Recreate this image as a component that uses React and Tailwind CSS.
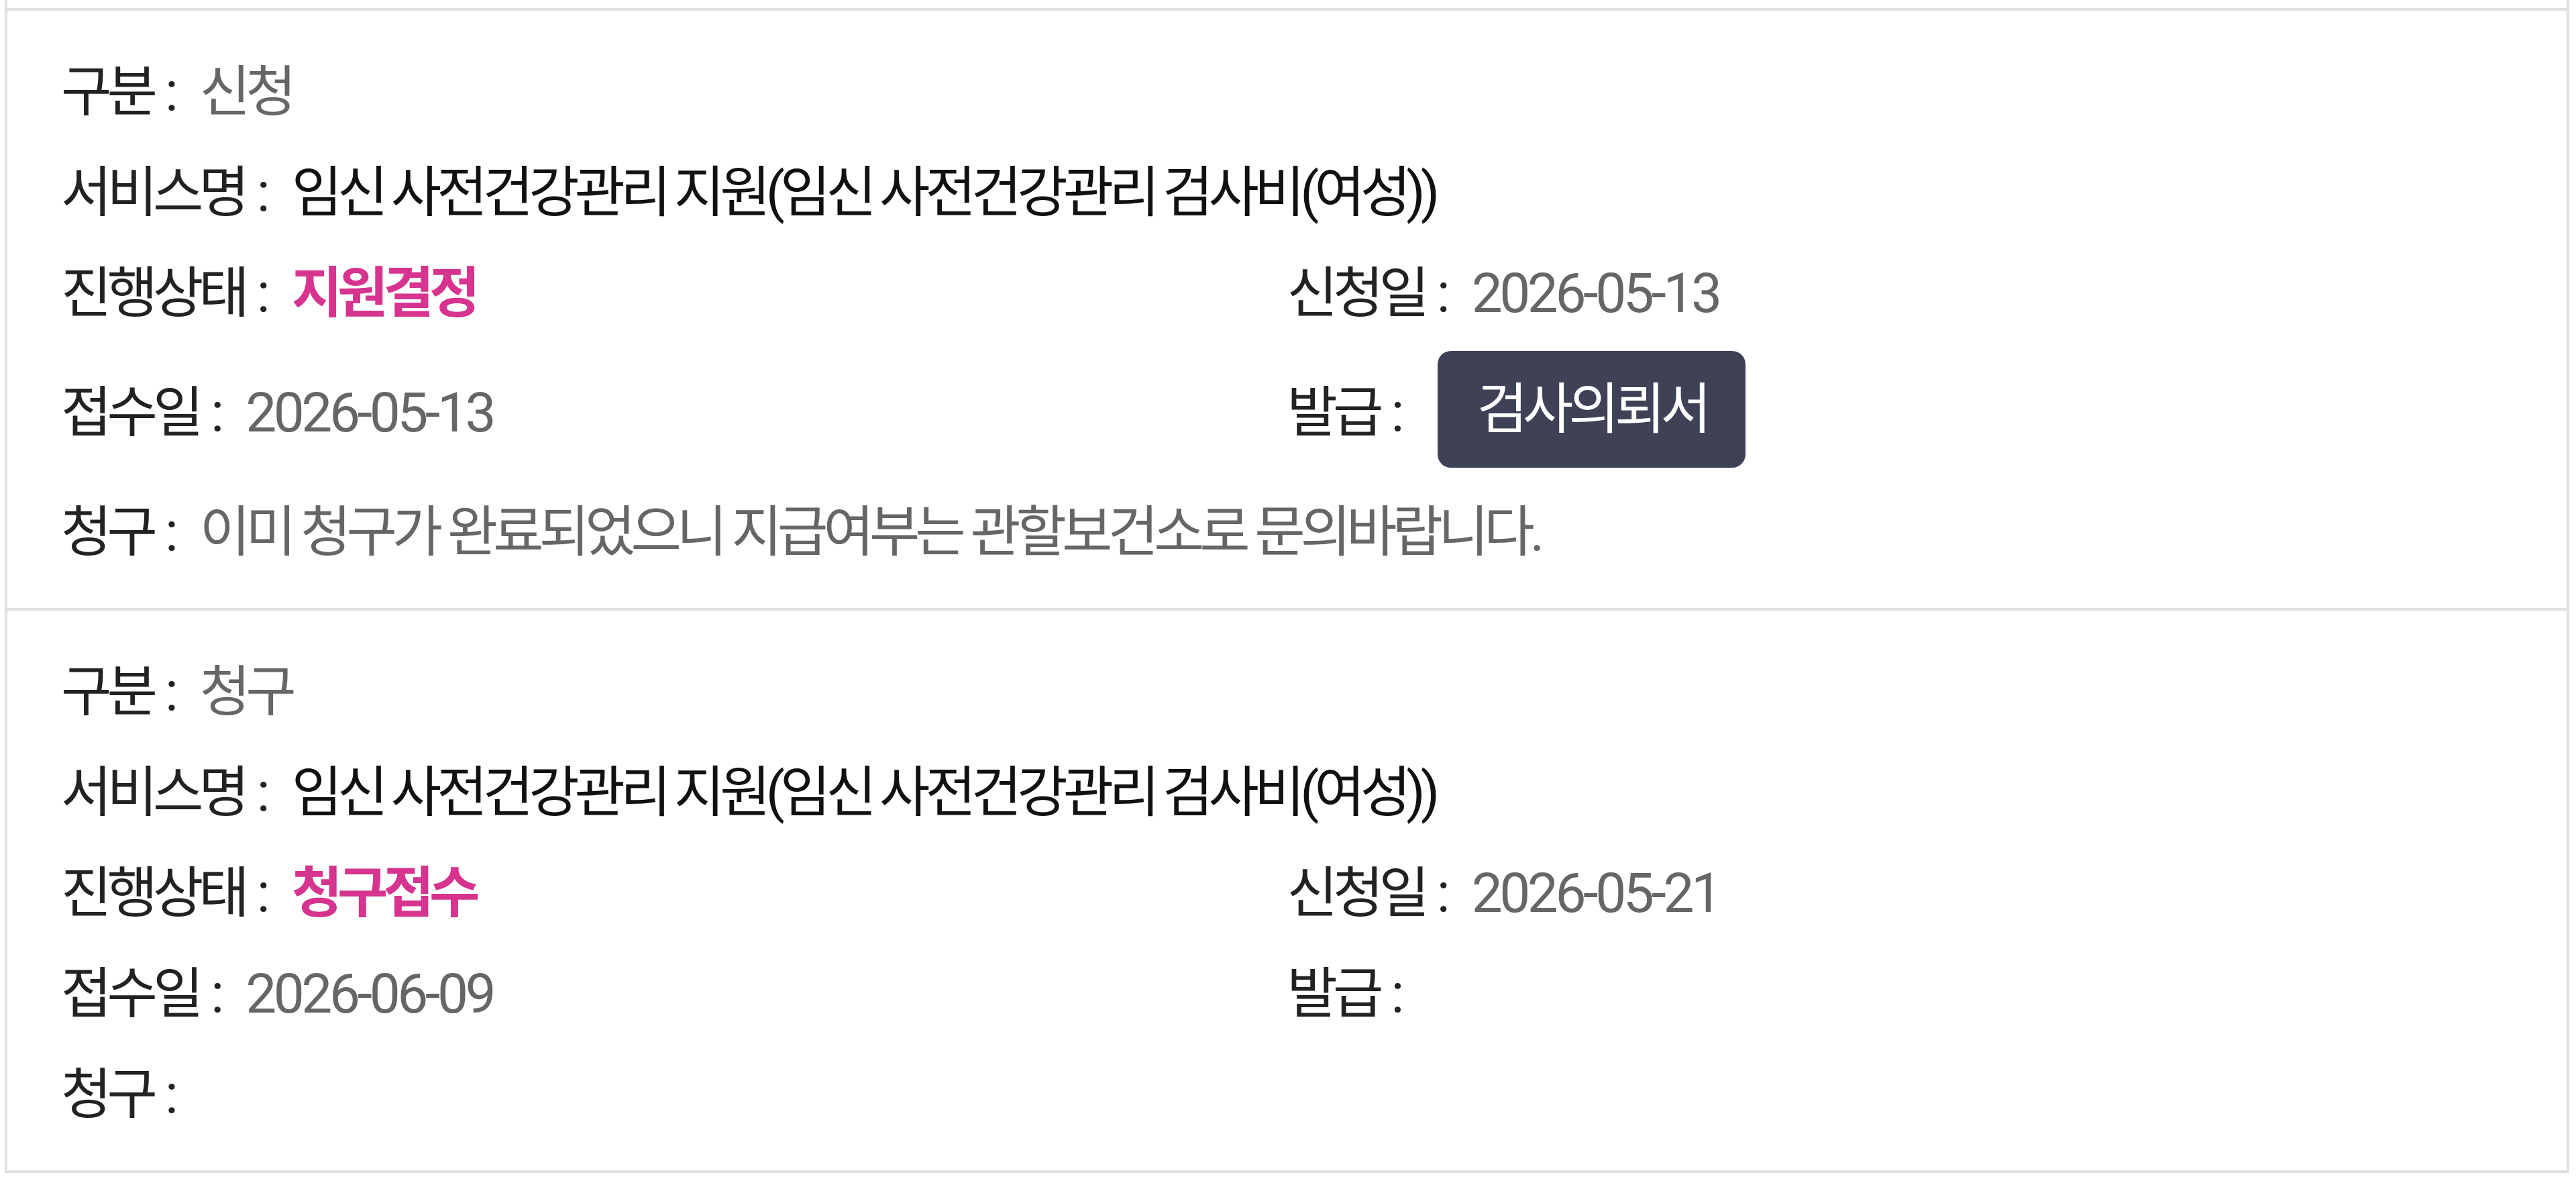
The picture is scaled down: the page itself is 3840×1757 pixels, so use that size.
const FONT = { fontFamily: '"Roboto", "Noto Sans CJK KR", sans-serif' };

const Field = ({ label, children, className = '' }) => {
    return (
        <div className={`flex items-center ${className}`}>
            <span className="text-[#222222]">{label}</span>
            <span className="ml-[18px] text-[#222222]">:</span>
            <span className="ml-[39px] flex items-center">{children}</span>
        </div>
    );
};

const Gray = ({ children }) => <span className="text-[#666666]">{children}</span>;
const DateText = ({ children }) => <span className="text-[#666666] tracking-[-4.5px]">{children}</span>;
const Status = ({ children }) => <span className="text-[#d6348e] font-bold">{children}</span>;

const Card = ({ item }) => {
    return (
        <div className="border-b-4 border-[#e0e0e0] pl-[80px] pr-[80px] pt-[46px] pb-[38px]">
            <Field label="구분" className="h-[150px]"><Gray>{item.type}</Gray></Field>
            <Field label="서비스명" className="h-[150px]">
                <span className="text-[#111111] [word-spacing:-2px]">{item.service}</span>
            </Field>
            <div className="grid grid-cols-2">
                <Field label="진행상태" className="h-[150px]"><Status>{item.status}</Status></Field>
                <Field label="신청일" className="h-[150px]"><DateText>{item.applied}</DateText></Field>
            </div>
            <div className="grid grid-cols-2">
                <Field label="접수일" className={item.issue ? 'h-[206px]' : 'h-[150px]'}><DateText>{item.received}</DateText></Field>
                <Field label="발급" className={item.issue ? 'h-[206px]' : 'h-[150px]'}>
                    {item.issue && (
                        <button className="ml-[18px] mb-[10px] w-[459px] h-[174px] rounded-[20px] bg-[#3f4156] text-white flex items-center justify-center">
                            {item.issue}
                        </button>
                    )}
                </Field>
            </div>
            <Field label="청구" className="h-[150px]">
                <span className="text-[#666666]">{item.claim}</span>
            </Field>
        </div>
    );
};

const items = [
    {
        type: '신청',
        service: '임신 사전건강관리 지원(임신 사전건강관리 검사비(여성))',
        status: '지원결정',
        applied: '2026-05-13',
        received: '2026-05-13',
        issue: '검사의뢰서',
        claim: '이미 청구가 완료되었으니 지급여부는 관할보건소로 문의바랍니다.',
    },
    {
        type: '청구',
        service: '임신 사전건강관리 지원(임신 사전건강관리 검사비(여성))',
        status: '청구접수',
        applied: '2026-05-21',
        received: '2026-06-09',
        issue: null,
        claim: '',
    },
];

const App = () => {
    return (
        <div className="w-full h-screen bg-white overflow-hidden" style={FONT}>
            <div className="ml-[7px] w-[3823px] border-x-4 border-[#e0e0e0] text-[82px] leading-none tracking-[-7px]">
                <div className="h-[16px] border-b-4 border-[#e0e0e0]" />
                {items.map((item, i) => <Card key={i} item={item} />)}
            </div>
        </div>
    );
};

export default App;
